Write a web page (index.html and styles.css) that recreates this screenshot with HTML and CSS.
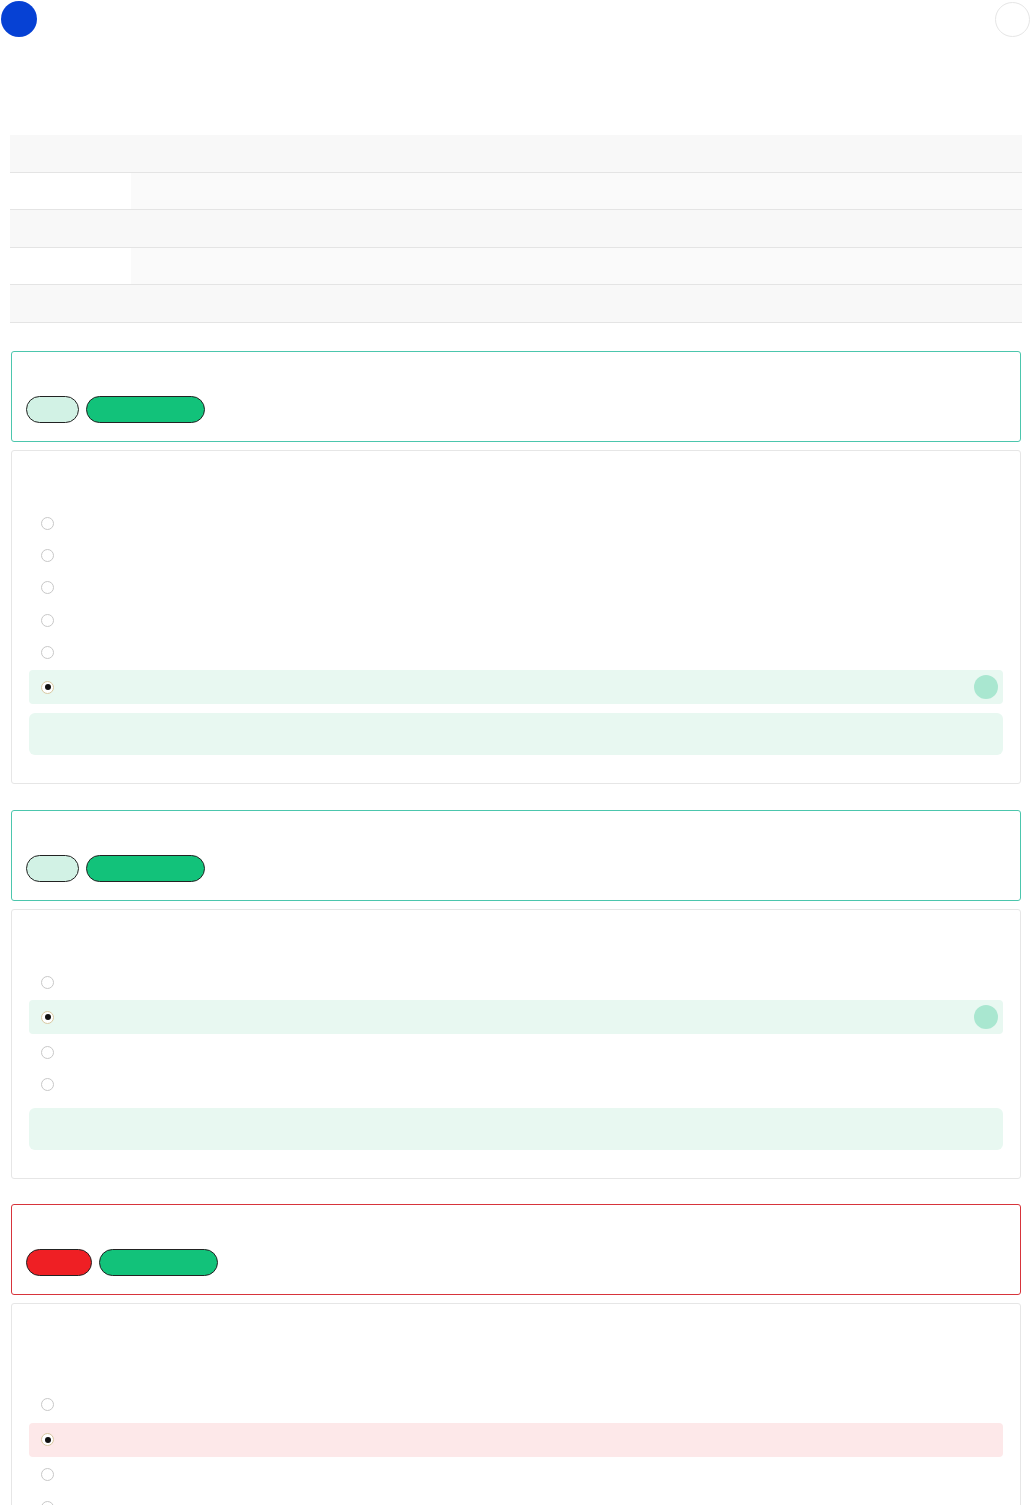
FILE: index.html
```html
<!DOCTYPE html>
<html lang="en">
<head>
  <meta charset="UTF-8" />
  <title>Quiz review</title>
  <meta name="viewport" content="width=device-width, initial-scale=1" />
  <link rel="stylesheet" href="styles.css">
</head>
<body>
  <div class="topbar">
    <div class="logo"></div>
    <div class="avatar"></div>
  </div>

  <div class="page">
    <table class="summary">
      <tr><th></th><td></td></tr>
      <tr><th></th><td></td></tr>
      <tr><th></th><td></td></tr>
      <tr><th></th><td></td></tr>
      <tr><th></th><td></td></tr>
    </table>

    <div class="question-group">
      <div class="q-head correct">
        <div class="q-title"></div>
        <div class="pills">
          <span class="pill pill-ok"></span>
          <span class="pill pill-mark"></span>
        </div>
      </div>
      <div class="q-body">
        <div class="q-text"></div>
        <div class="options">
          <div class="option"><span class="radio"></span></div>
          <div class="option"><span class="radio"></span></div>
          <div class="option"><span class="radio"></span></div>
          <div class="option"><span class="radio"></span></div>
          <div class="option"><span class="radio"></span></div>
          <div class="option chosen-right"><span class="radio checked"></span><span class="tick"></span></div>
        </div>
        <div class="explain"></div>
      </div>
    </div>

    <div class="question-group">
      <div class="q-head correct">
        <div class="q-title"></div>
        <div class="pills">
          <span class="pill pill-ok"></span>
          <span class="pill pill-mark"></span>
        </div>
      </div>
      <div class="q-body">
        <div class="q-text"></div>
        <div class="options">
          <div class="option"><span class="radio"></span></div>
          <div class="option chosen-right"><span class="radio checked"></span><span class="tick"></span></div>
          <div class="option"><span class="radio"></span></div>
          <div class="option"><span class="radio"></span></div>
        </div>
        <div class="explain"></div>
      </div>
    </div>

    <div class="question-group">
      <div class="q-head wrong">
        <div class="q-title"></div>
        <div class="pills">
          <span class="pill pill-bad"></span>
          <span class="pill pill-mark"></span>
        </div>
      </div>
      <div class="q-body">
        <div class="q-text long"></div>
        <div class="options">
          <div class="option"><span class="radio"></span></div>
          <div class="option chosen-wrong"><span class="radio checked"></span></div>
          <div class="option"><span class="radio"></span></div>
          <div class="option"><span class="radio"></span></div>
        </div>
        <div class="explain"></div>
      </div>
    </div>
  </div>
</body>
</html>
```

FILE: styles.css
```css
body {
  margin: 0;
  font-family: "Liberation Sans", Arial, sans-serif;
  background: #fff;
  color: #222;
}
.topbar {
  display: flex;
  justify-content: space-between;
  align-items: flex-start;
  padding: 1px 1px 0 1px;
}
.logo {
  width: 36px;
  height: 36px;
  border-radius: 50%;
  background: #0641d4;
}
.avatar {
  width: 33px;
  height: 33px;
  margin-top: 1px;
  border-radius: 50%;
  border: 1px solid #e6e6e6;
  background: #fff;
}
.page {
  padding: 98px 9px 0 10px;
}

/* Summary table */
.summary {
  width: 100%;
  border-collapse: collapse;
  margin-bottom: 28px;
}
.summary th,
.summary td {
  height: 36.6px;
  padding: 0;
  border-bottom: 1px solid #e4e4e4;
}
.summary th {
  width: 121px;
}
.summary tr:nth-child(odd) th,
.summary tr:nth-child(odd) td {
  background: #f8f8f8;
}
.summary tr:nth-child(even) th {
  background: #fff;
}
.summary tr:nth-child(even) td {
  background: #fafafa;
}

/* Question cards */
.question-group {
  margin: 0 1px 25.5px 1px;
}
.q-head {
  border: 1px solid #4cc6ad;
  border-radius: 3px;
  padding: 14px 14px 18px;
  margin-bottom: 8px;
}
.q-head.wrong {
  border-color: #d7343b;
}
.q-title {
  height: 30px;
}
.pills {
  display: flex;
  gap: 7px;
}
.pill {
  height: 25px;
  border: 1px solid #222;
  border-radius: 14px;
}
.pill-ok {
  width: 51px;
  background: #d2f2e5;
}
.pill-bad {
  width: 64px;
  background: #ef1f24;
}
.pill-mark {
  width: 117px;
  background: #12c27a;
}
.q-body {
  border: 1px solid #e6e6e6;
  border-radius: 3px;
  padding: 18px 17px 28px;
}
.q-text {
  height: 38px;
}
.q-text.long {
  height: 66px;
}
.options {
  display: flex;
  flex-direction: column;
}
.option {
  height: 32.3px;
  display: flex;
  align-items: center;
  justify-content: space-between;
  padding: 0 5px 0 12px;
  border-radius: 4px;
}
.chosen-right,
.chosen-wrong {
  height: 34px;
  margin: 2px 0;
}
.chosen-right {
  background: #e8f8f1;
}
.chosen-wrong {
  background: #fde8e9;
}
.radio {
  width: 11px;
  height: 11px;
  border-radius: 50%;
  border: 1px solid #c8c8c8;
  background: #fff;
  box-sizing: content-box;
  display: flex;
  align-items: center;
  justify-content: center;
}
.radio.checked {
  border-color: #d9c8a2;
}
.radio.checked::after {
  content: "";
  width: 6px;
  height: 6px;
  border-radius: 50%;
  background: #111;
}
.tick {
  width: 24px;
  height: 24px;
  border-radius: 50%;
  background: #a9e7d0;
}
.explain {
  margin-top: 7px;
  height: 42px;
  border-radius: 6px;
  background: #e8f8f1;
}
```
